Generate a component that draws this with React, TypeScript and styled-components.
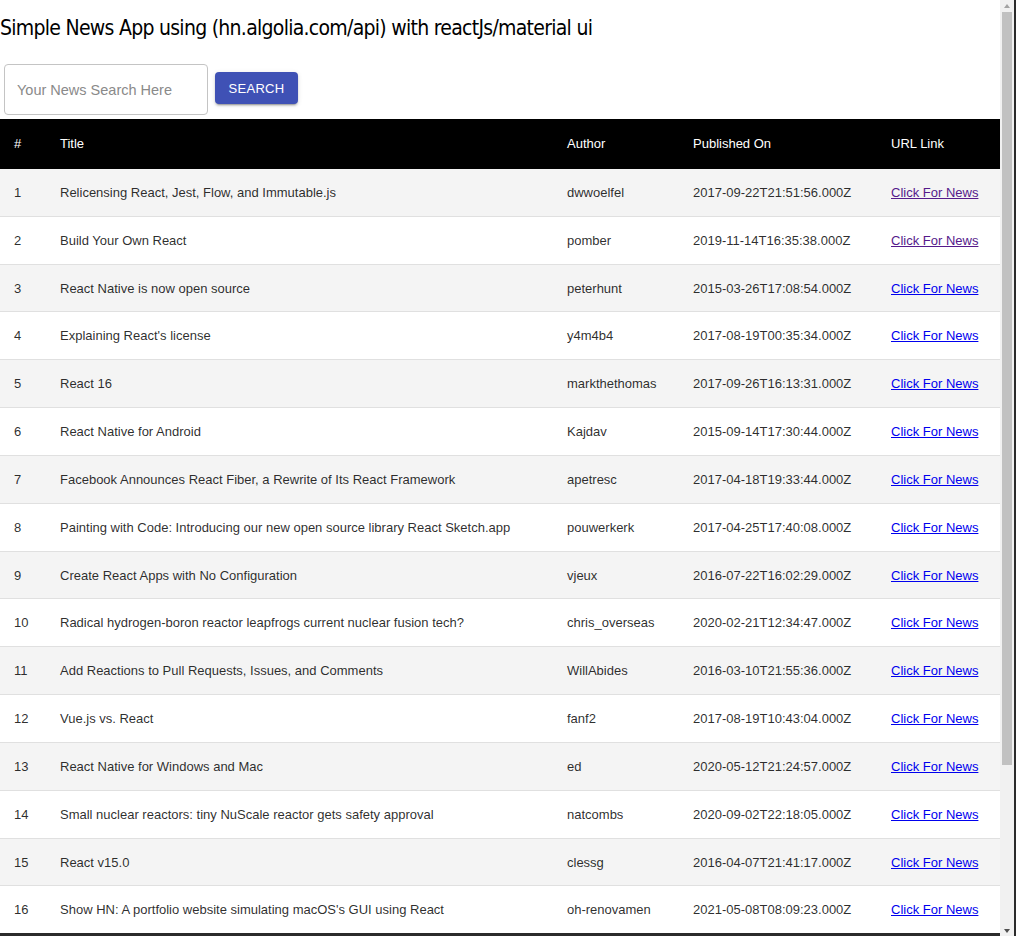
import React from "react";
import styled, { createGlobalStyle } from "styled-components";

const GlobalStyle = createGlobalStyle`
  html, body { margin: 0; padding: 0; background: #2b2b2b; overflow: hidden; }
  body { font-family: "Liberation Sans", Arial, sans-serif; }
`;

const Frame = styled.div`
  display: flex;
  align-items: flex-start;
  width: 1016px;
  height: 936px;
  background: #2b2b2b;
`;

const Content = styled.main`
  width: 1000px;
  height: 933px;
  overflow: hidden;
  background: #fff;
`;

const ScrollBar = styled.div`
  width: 14px;
  height: 936px;
  background: #f1f1f1;
  display: flex;
  flex-direction: column;
  align-items: center;
`;

const ArrowButton = styled.div<{ $down?: boolean }>`
  height: 12px;
  width: 14px;
  display: flex;
  justify-content: center;
  align-items: ${(p) => (p.$down ? "flex-start" : "center")};
  padding-top: ${(p) => (p.$down ? "5px" : "0")};
  box-sizing: border-box;
  &::after {
    content: "";
    width: 0;
    height: 0;
    border-left: 3.5px solid transparent;
    border-right: 3.5px solid transparent;
    ${(p) =>
      p.$down
        ? "border-top: 4px solid #505050;"
        : "border-bottom: 4px solid #a3a3a3;"}
  }
`;

const Track = styled.div`
  flex: 1;
  width: 14px;
  display: flex;
  justify-content: center;
`;

const Thumb = styled.div`
  width: 10px;
  height: 753px;
  background: #c1c1c1;
`;

const Title = styled.h1`
  margin: 15px 0 0 0;
  height: 30px;
  line-height: 26px;
  font-family: "DejaVu Sans Condensed", "DejaVu Sans", sans-serif;
  font-weight: 400;
  font-size: 21px;
  letter-spacing: -0.72px;
  color: #000;
  white-space: nowrap;
`;

const SearchBar = styled.form`
  display: flex;
  align-items: flex-start;
  gap: 7px;
  margin: 0;
  padding: 19px 0 4px 4px;
`;

const SearchInput = styled.input`
  box-sizing: border-box;
  width: 204px;
  height: 51px;
  border: 1px solid #c4c4c4;
  border-radius: 4px;
  padding: 0 12px;
  font-family: "Liberation Sans", Arial, sans-serif;
  font-size: 14.5px;
  color: #333;
  outline: none;
  &::placeholder { color: #8a8a8a; }
`;

const SearchButton = styled.button`
  box-sizing: border-box;
  margin-top: 8px;
  width: 83px;
  height: 32px;
  border: none;
  border-radius: 4px;
  background: #3f51b5;
  color: #fff;
  font-family: "Liberation Sans", Arial, sans-serif;
  font-size: 13px;
  letter-spacing: 0.3px;
  text-transform: uppercase;
  box-shadow: 0 3px 1px -2px rgba(0,0,0,0.2), 0 2px 2px 0 rgba(0,0,0,0.14), 0 1px 5px 0 rgba(0,0,0,0.12);
  cursor: pointer;
`;

const Table = styled.table`
  width: 1000px;
  border-collapse: collapse;
  table-layout: fixed;
  font-family: "Liberation Sans", Arial, sans-serif;
  font-size: 13px;
`;

const HeadCell = styled.th<{ $w: number }>`
  width: ${(p) => p.$w}px;
  background: #000;
  color: #fff;
  font-weight: 400;
  text-align: left;
  padding: 15px 14px;
  line-height: 20px;
  box-sizing: border-box;
`;

const Row = styled.tr<{ $odd: boolean }>`
  background: ${(p) => (p.$odd ? "#f4f4f4" : "#fff")};
`;

const Cell = styled.td`
  padding: 15px 14px 13px;
  line-height: 18.83px;
  color: rgba(0, 0, 0, 0.84);
  border-bottom: 1px solid #e0e0e0;
  white-space: nowrap;
  overflow: hidden;
`;

const NewsLink = styled.a<{ $visited: boolean }>`
  color: ${(p) => (p.$visited ? "#551a8b" : "#0000ee")};
  text-decoration: underline;
`;

type Item = { title: string; author: string; date: string; visited?: boolean };

const items: Item[] = [
  { title: "Relicensing React, Jest, Flow, and Immutable.js", author: "dwwoelfel", date: "2017-09-22T21:51:56.000Z", visited: true },
  { title: "Build Your Own React", author: "pomber", date: "2019-11-14T16:35:38.000Z", visited: true },
  { title: "React Native is now open source", author: "peterhunt", date: "2015-03-26T17:08:54.000Z" },
  { title: "Explaining React's license", author: "y4m4b4", date: "2017-08-19T00:35:34.000Z" },
  { title: "React 16", author: "markthethomas", date: "2017-09-26T16:13:31.000Z" },
  { title: "React Native for Android", author: "Kajdav", date: "2015-09-14T17:30:44.000Z" },
  { title: "Facebook Announces React Fiber, a Rewrite of Its React Framework", author: "apetresc", date: "2017-04-18T19:33:44.000Z" },
  { title: "Painting with Code: Introducing our new open source library React Sketch.app", author: "pouwerkerk", date: "2017-04-25T17:40:08.000Z" },
  { title: "Create React Apps with No Configuration", author: "vjeux", date: "2016-07-22T16:02:29.000Z" },
  { title: "Radical hydrogen-boron reactor leapfrogs current nuclear fusion tech?", author: "chris_overseas", date: "2020-02-21T12:34:47.000Z" },
  { title: "Add Reactions to Pull Requests, Issues, and Comments", author: "WillAbides", date: "2016-03-10T21:55:36.000Z" },
  { title: "Vue.js vs. React", author: "fanf2", date: "2017-08-19T10:43:04.000Z" },
  { title: "React Native for Windows and Mac", author: "ed", date: "2020-05-12T21:24:57.000Z" },
  { title: "Small nuclear reactors: tiny NuScale reactor gets safety approval", author: "natcombs", date: "2020-09-02T22:18:05.000Z" },
  { title: "React v15.0", author: "clessg", date: "2016-04-07T21:41:17.000Z" },
  { title: "Show HN: A portfolio website simulating macOS's GUI using React", author: "oh-renovamen", date: "2021-05-08T08:09:23.000Z" },
];

const columns = [
  { label: "#", w: 46 },
  { label: "Title", w: 507 },
  { label: "Author", w: 126 },
  { label: "Published On", w: 198 },
  { label: "URL Link", w: 123 },
];

export default function App() {
  return (
    <Frame>
      <GlobalStyle />
      <Content>
        <Title>Simple News App using (hn.algolia.com/api) with reactJs/material ui</Title>
        <SearchBar onSubmit={(e) => e.preventDefault()}>
          <SearchInput placeholder="Your News Search Here" />
          <SearchButton type="submit">Search</SearchButton>
        </SearchBar>
        <Table>
          <thead>
            <tr>
              {columns.map((c) => (
                <HeadCell key={c.label} $w={c.w}>
                  {c.label}
                </HeadCell>
              ))}
            </tr>
          </thead>
          <tbody>
            {items.map((it, i) => (
              <Row key={i} $odd={i % 2 === 0}>
                <Cell>{i + 1}</Cell>
                <Cell>{it.title}</Cell>
                <Cell>{it.author}</Cell>
                <Cell>{it.date}</Cell>
                <Cell>
                  <NewsLink href="#" $visited={!!it.visited}>
                    Click For News
                  </NewsLink>
                </Cell>
              </Row>
            ))}
          </tbody>
        </Table>
      </Content>
      <ScrollBar aria-hidden="true">
        <ArrowButton />
        <Track>
          <Thumb />
        </Track>
        <ArrowButton $down />
      </ScrollBar>
    </Frame>
  );
}
